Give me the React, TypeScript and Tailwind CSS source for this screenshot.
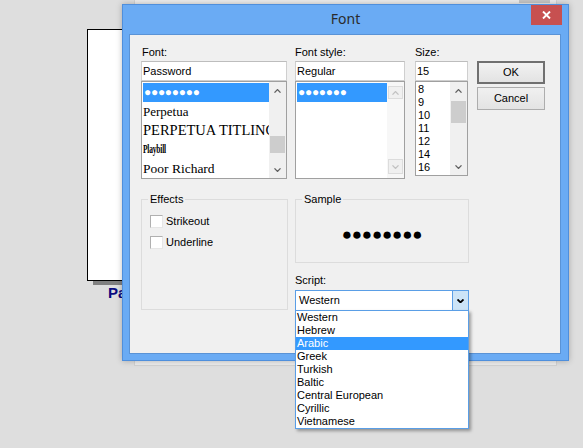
import React from "react";

function Chev({ up, color = "#606060", w = 7, sw = 1.3 }: { up?: boolean; color?: string; w?: number; sw?: number }) {
  return (
    <svg width={w} height={4} viewBox="0 0 7 4">
      <path
        d={up ? "M0.5 3.6 L3.5 0.6 L6.5 3.6" : "M0.5 0.4 L3.5 3.4 L6.5 0.4"}
        fill="none"
        stroke={color}
        strokeWidth={sw}
      />
    </svg>
  );
}

function ScrollBar({ thumbTop, thumbH }: { thumbTop: number; thumbH: number }) {
  return (
    <div className="w-[17px] h-full flex flex-col bg-[#f0f0f0]">
      <div className="h-[17px] flex items-center justify-center">
        <Chev up />
      </div>
      <div className="flex-1">
        <div className="bg-[#cdcdcd] mx-[1px]" style={{ marginTop: thumbTop, height: thumbH }} />
      </div>
      <div className="h-[17px] flex items-center justify-center">
        <Chev />
      </div>
    </div>
  );
}

function DisabledScrollBar() {
  return (
    <div className="w-[17px] h-full flex flex-col bg-[#f7f7f7] py-[4px] px-[1px] justify-between">
      <div className="h-[13px] border border-[#dcdcdc] bg-[#f0f0f0] flex items-center justify-center">
        <Chev up color="#c2c2c2" />
      </div>
      <div className="h-[15px] border border-[#dcdcdc] bg-[#f0f0f0] flex items-center justify-center">
        <Chev color="#c2c2c2" />
      </div>
    </div>
  );
}

function Input({ value }: { value: string }) {
  return (
    <div className="h-[20px] bg-white border border-[#cfcfcf] border-t-[#bdbdbd] pl-[1px] flex items-center text-[11px] leading-[13px]">
      {value}
    </div>
  );
}

const scripts = ["Western", "Hebrew", "Arabic", "Greek", "Turkish", "Baltic", "Central European", "Cyrillic", "Vietnamese"];
const sizes = ["8", "9", "10", "11", "12", "14", "16"];

export default function App() {
  return (
    <div className="relative w-[583px] h-[448px] overflow-hidden bg-[#dedede] text-black [font-family:'Liberation_Sans',Arial,sans-serif]">
      {/* desktop background items */}
      <div className="absolute left-[134px] top-[-1px] w-[423px] h-[367px] bg-[#ececec] border border-[#d2d2d2]" />
      <div className="absolute left-[519px] top-0 w-[31px] h-[3px] bg-[#c6c6c6]" />
      <div className="absolute left-[87px] top-[29px] w-[60px] h-[252px] bg-white border border-black" />
      <div className="absolute left-[93px] top-[281px] w-[60px] h-[4px] bg-[#808080]" />
      <div className="absolute left-[108px] top-[284px] text-[15px] leading-[18px] font-bold text-[#0a0a80]">Password</div>

      {/* dialog window */}
      <div className="absolute left-[122px] top-[4px] w-[447px] h-[357px] bg-[#6aabf4] border border-[#4f8fdc] shadow-[0_0_6px_rgba(0,0,0,0.25)] flex flex-col">
        <div className="h-[29px] relative flex items-center justify-center">
          <span className="[font-family:'Noto_Sans',sans-serif] text-[14px] leading-[18px] text-[#2b2b2b] mt-[-1px]">Font</span>
          <div className="absolute right-[6px] top-0 w-[31px] h-[20px] bg-[#c75050] flex items-center justify-center">
            <svg width="9" height="8" viewBox="0 0 9 8">
              <path d="M1 0.5 L8 7.5 M8 0.5 L1 7.5" stroke="#ffffff" strokeWidth="1.9" />
            </svg>
          </div>
        </div>

        <div className="ml-[6px] w-[432px] h-[320px] bg-[#f0f0f0] border border-[#5a93d6] pt-[11px] pl-[11px] text-[11px] leading-[13px]">
          {/* top row */}
          <div className="flex items-start">
            {/* Font column */}
            <div className="w-[146px] mr-[8px] flex flex-col">
              <div className="h-[15px] pl-[1px]">Font:</div>
              <Input value="Password" />
              <div className="h-[98px] bg-white border border-[#a0a0a0] flex">
                <div className="flex-1 pt-[1px] pl-[1px] overflow-hidden">
                  <div className="h-[19px] bg-[#3399ff] text-white text-[12px] tracking-[-0.3px] flex items-center pl-[1px] whitespace-nowrap">●●●●●●●●</div>
                  <div className="h-[19px] flex items-center [font-family:'Liberation_Serif',serif] text-[13px] whitespace-nowrap">Perpetua</div>
                  <div className="h-[19px] flex items-center [font-family:'Liberation_Serif',serif] text-[14.5px] whitespace-nowrap">PERPETUA TITLING</div>
                  <div className="h-[19px] flex items-center whitespace-nowrap">
                    <span className="inline-block origin-left scale-x-[0.62] [font-family:'Liberation_Serif',serif] font-bold text-[12px] tracking-[-0.3px]">Playbill</span>
                  </div>
                  <div className="h-[19px] flex items-center [font-family:'Liberation_Serif',serif] text-[13.5px] whitespace-nowrap">Poor Richard</div>
                </div>
                <ScrollBar thumbTop={37} thumbH={17} />
              </div>
            </div>

            {/* Font style column */}
            <div className="w-[110px] mr-[10px] flex flex-col">
              <div className="h-[15px]">Font style:</div>
              <Input value="Regular" />
              <div className="h-[98px] bg-white border border-[#a0a0a0] flex">
                <div className="flex-1 pt-[1px] pl-[1px] overflow-hidden">
                  <div className="h-[19px] bg-[#3399ff] text-white text-[12px] tracking-[-0.3px] flex items-center pl-[1px] whitespace-nowrap">●●●●●●●</div>
                </div>
                <DisabledScrollBar />
              </div>
            </div>

            {/* Size column */}
            <div className="w-[53px] mr-[9px] flex flex-col">
              <div className="h-[15px]">Size:</div>
              <Input value="15" />
              <div className="h-[95px] bg-white border border-[#a0a0a0] flex">
                <div className="flex-1 pt-[1px] pl-[2px] overflow-hidden">
                  {sizes.map((s) => (
                    <div key={s} className="h-[13px] leading-[13px]">{s}</div>
                  ))}
                </div>
                <ScrollBar thumbTop={2} thumbH={22} />
              </div>
            </div>

            {/* Buttons */}
            <div className="w-[68px] flex flex-col pt-[15px]">
              <div className="h-[23px] border-2 border-[#707070] bg-gradient-to-b from-[#f2f2f2] to-[#e3e3e3] flex items-center justify-center">OK</div>
              <div className="h-[23px] mt-[3px] border border-[#adadad] bg-gradient-to-b from-[#f0f0f0] to-[#e3e3e3] flex items-center justify-center">Cancel</div>
            </div>
          </div>

          {/* bottom row */}
          <div className="flex items-start mt-[14px]">
            <fieldset className="w-[147px] h-[117px] border border-[#dcdcdc] mr-[7px]">
              <legend className="ml-[6px] px-[2px] leading-[13px]">Effects</legend>
              <div className="pl-[8px] pt-[9px] flex flex-col gap-[8px]">
                <div className="flex items-center h-[13px]">
                  <div className="w-[13px] h-[13px] bg-white border border-[#b0b0b0] border-r-[#e6e6e6] border-b-[#e6e6e6] mr-[3px]" />
                  <span>Strikeout</span>
                </div>
                <div className="flex items-center h-[13px]">
                  <div className="w-[13px] h-[13px] bg-white border border-[#b0b0b0] border-r-[#e6e6e6] border-b-[#e6e6e6] mr-[3px]" />
                  <span>Underline</span>
                </div>
              </div>
            </fieldset>

            <div className="w-[174px] flex flex-col">
              <fieldset className="h-[70px] border border-[#dcdcdc]">
                <legend className="ml-[6px] px-[2px] leading-[13px]">Sample</legend>
                <div className="h-[54px] pt-[3px] flex items-center justify-center">
                  <span className="text-[17px] leading-[17px] tracking-[-0.2px] font-bold whitespace-nowrap">●●●●●●●●</span>
                </div>
              </fieldset>
              <div className="h-[16px] mt-[11px]">Script:</div>
              <div className="relative h-[21px] bg-white border border-[#5a9ee6] flex">
                <div className="flex-1 pl-[3px] flex items-center">Western</div>
                <div className="w-[16px] border-l border-[#5a9ee6] bg-[#cce4f7] flex items-center justify-center">
                  <Chev color="#000000" sw={1.8} />
                </div>
                <div className="absolute left-[-1px] right-[-1px] top-[19px] bg-white border border-[#5a9ee6] shadow-[2px_2px_3px_rgba(0,0,0,0.35)] z-10">
                  {scripts.map((s) => (
                    <div
                      key={s}
                      className={
                        s === "Arabic"
                          ? "h-[13px] leading-[13px] pl-[1px] bg-[#3399ff] text-white"
                          : "h-[13px] leading-[13px] pl-[1px]"
                      }
                    >
                      {s}
                    </div>
                  ))}
                </div>
              </div>
            </div>
          </div>
        </div>
      </div>
    </div>
  );
}
